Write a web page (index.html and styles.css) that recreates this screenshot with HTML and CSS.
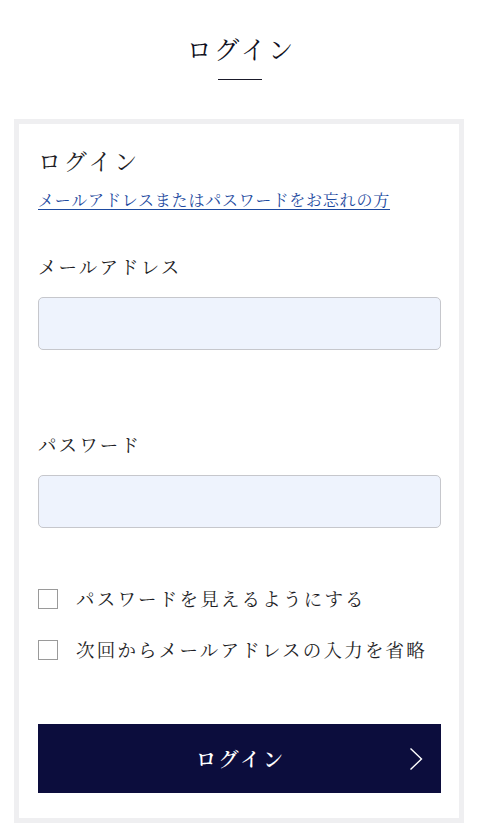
FILE: index.html
```html
<!DOCTYPE html>
<html lang="ja">
<head>
<meta charset="utf-8">
<title>ログイン</title>
<link rel="stylesheet" href="styles.css">
</head>
<body>
<header class="page-head">
  <h1 class="page-title">ログイン</h1>
</header>
<main class="card">
  <h2 class="card-title">ログイン</h2>
  <a class="forgot" href="#">メールアドレスまたはパスワードをお忘れの方</a>
  <div class="field field-email">
    <label class="label" for="email">メールアドレス</label>
    <input class="input" id="email" type="text">
  </div>
  <div class="field field-pass">
    <label class="label" for="pass">パスワード</label>
    <input class="input" id="pass" type="password">
  </div>
  <div class="checks">
    <label class="check"><span class="box"></span><span class="check-text">パスワードを見えるようにする</span></label>
    <label class="check"><span class="box"></span><span class="check-text">次回からメールアドレスの入力を省略</span></label>
  </div>
  <button class="submit" type="button">
    <span class="submit-text">ログイン</span>
    <svg class="chev" width="14" height="24" viewBox="0 0 14 24"><path d="M1.5 1.5 L12.5 12 L1.5 22.5" fill="none" stroke="#fff" stroke-width="1.4"/></svg>
  </button>
</main>
</body>
</html>
```
FILE: styles.css
```css
* { box-sizing: border-box; }
html, body { margin: 0; padding: 0; background: #fff; }
body {
  font-family: "Noto Serif CJK JP", "Noto Serif JP", "Liberation Serif", "Noto Sans CJK JP", serif;
  color: #1e1e26;
  width: 480px;
}
.page-head {
  padding-top: 30px;
  display: flex;
  flex-direction: column;
  align-items: center;
}
.page-title {
  margin: 0;
  font-size: 25px;
  line-height: 36px;
  font-weight: 400;
  letter-spacing: 2.6px;
  padding-left: 2.6px;
  color: #111122;
}
.page-head::after {
  content: "";
  display: block;
  width: 44px;
  height: 1px;
  background: #1a1a2a;
  margin-top: 13px;
}
.card {
  margin: 39px 16px 0 14px;
  border: 5px solid #efeff1;
  padding: 20px 18px 25px 19px;
  display: flex;
  flex-direction: column;
}
.card-title {
  margin: 0;
  font-size: 23px;
  line-height: 33px;
  font-weight: 400;
  letter-spacing: 2.8px;
}
.forgot {
  margin-top: 12px;
  font-size: 16px;
  line-height: 22px;
  letter-spacing: 0.8px;
  color: #1d4aa0;
  text-decoration: underline;
  text-underline-offset: 3px;
  align-self: flex-start;
}
.field {
  display: flex;
  flex-direction: column;
  gap: 17px;
}
.field-email { margin-top: 42px; }
.field-pass { margin-top: 81px; }
.label {
  font-size: 18.5px;
  line-height: 27px;
  letter-spacing: 2.1px;
}
.input {
  width: 100%;
  height: 53px;
  border: 1px solid #c6c7cc;
  border-radius: 5px;
  background: #eef3fd;
  font: inherit;
  outline: none;
}
.checks {
  margin-top: 57px;
  display: flex;
  flex-direction: column;
  gap: 24px;
}
.check {
  display: flex;
  align-items: center;
  gap: 18px;
  font-size: 18.5px;
  line-height: 27px;
  letter-spacing: 2.2px;
}
.box {
  width: 20px;
  height: 20px;
  border: 1px solid #9a9a9a;
  background: #fff;
  flex: none;
}
.submit {
  margin-top: 61px;
  height: 69px;
  width: 100%;
  border: none;
  border-radius: 0;
  background: #0c0d3d;
  color: #fff;
  font: inherit;
  font-size: 20px;
  font-weight: 600;
  letter-spacing: 2.75px;
  display: flex;
  align-items: center;
  justify-content: center;
  position: relative;
  padding: 0;
}
.submit-text { padding-left: 2.75px; }
.chev {
  position: absolute;
  right: 18px;
  top: 23px;
}
```
